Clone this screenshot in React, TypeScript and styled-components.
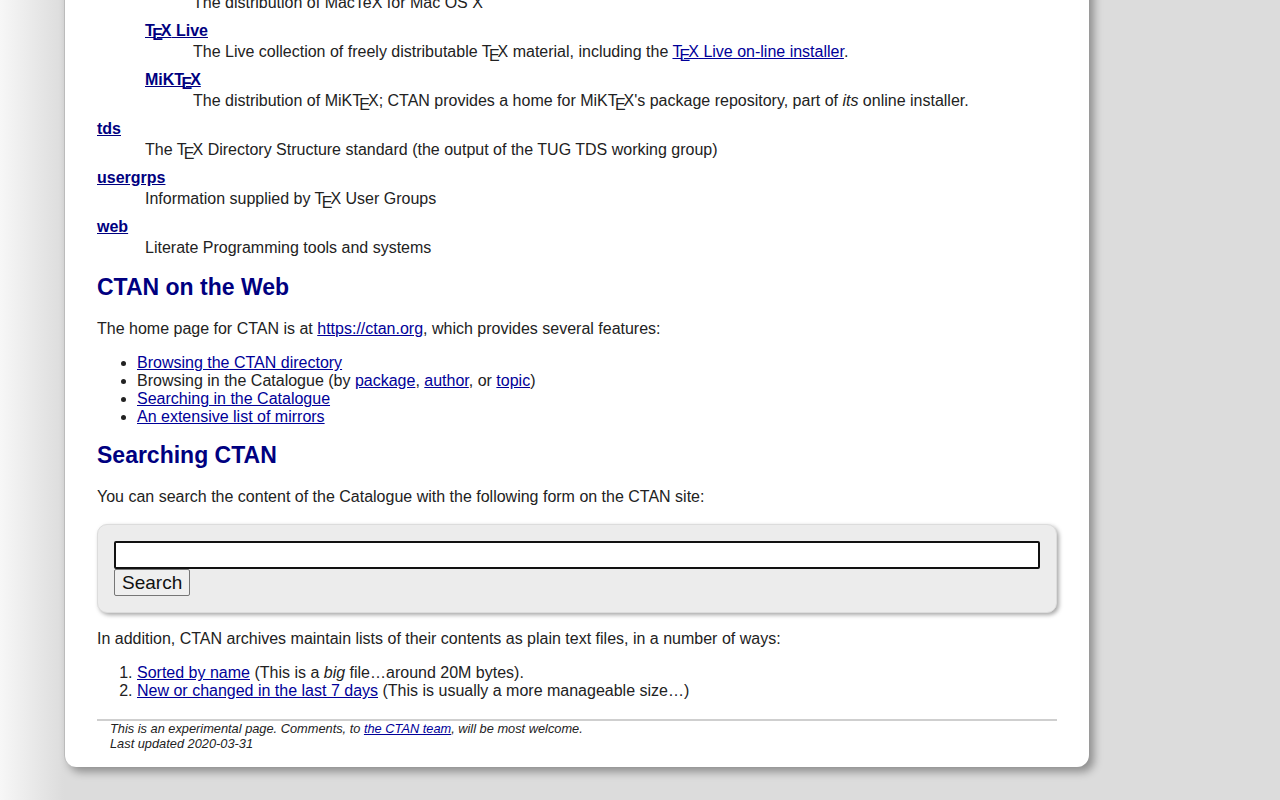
import styled, { createGlobalStyle } from "styled-components";

//GLOBAL
const GlobalStyle = createGlobalStyle`
  html, body {
    margin: 0;
    height: 100%;
    overflow: hidden;
  }
  body {
    background: linear-gradient(to right, #f7f7f7 0px, #dcdcdc 64px) #dcdcdc;
    font-family: "Liberation Sans", Arial, sans-serif;
    font-size: 16px;
    color: #222;
  }
`;

//PARTS
const TeX = () => (
  <span>
    T<LoweredE>E</LoweredE>X
  </span>
);

const Page = () => {
  return (
    <Card>
      <Dl>
        <Dd $nested>
          <Dl>
            <Dt>
              <Link href="#">MacTeX</Link>
            </Dt>
            <Dd>The distribution of MacTeX for Mac OS X</Dd>
            <Dt>
              <Link href="#">
                <TeX /> Live
              </Link>
            </Dt>
            <Dd>
              The Live collection of freely distributable <TeX /> material, including the{" "}
              <Link href="#">
                <TeX /> Live on-line installer
              </Link>
              .
            </Dd>
            <Dt>
              <Link href="#">
                MiKT<LoweredE>E</LoweredE>X
              </Link>
            </Dt>
            <Dd>
              The distribution of MiKT<LoweredE>E</LoweredE>X; CTAN provides a home for MiKT
              <LoweredE>E</LoweredE>X's package repository, part of <i>its</i> online installer.
            </Dd>
          </Dl>
        </Dd>
        <Dt>
          <Link href="#">tds</Link>
        </Dt>
        <Dd>
          The <TeX /> Directory Structure standard (the output of the TUG TDS working group)
        </Dd>
        <Dt>
          <Link href="#">usergrps</Link>
        </Dt>
        <Dd>
          Information supplied by <TeX /> User Groups
        </Dd>
        <Dt>
          <Link href="#">web</Link>
        </Dt>
        <Dd>Literate Programming tools and systems</Dd>
      </Dl>

      <Heading>CTAN on the Web</Heading>
      <Para>
        The home page for CTAN is at <Link href="#">https://ctan.org</Link>, which provides
        several features:
      </Para>
      <BulletList>
        <li>
          <Link href="#">Browsing the CTAN directory</Link>
        </li>
        <li>
          Browsing in the Catalogue (by <Link href="#">package</Link>,{" "}
          <Link href="#">author</Link>, or <Link href="#">topic</Link>)
        </li>
        <li>
          <Link href="#">Searching in the Catalogue</Link>
        </li>
        <li>
          <Link href="#">An extensive list of mirrors</Link>
        </li>
      </BulletList>

      <Heading>Searching CTAN</Heading>
      <Para>You can search the content of the Catalogue with the following form on the CTAN site:</Para>
      <SearchForm onSubmit={(e) => e.preventDefault()}>
        <SearchInput type="text" />
        <SearchButton type="submit">Search</SearchButton>
      </SearchForm>

      <Para>
        In addition, CTAN archives maintain lists of their contents as plain text files, in a
        number of ways:
      </Para>
      <NumberList>
        <li>
          <Link href="#">Sorted by name</Link> (This is a <i>big</i> file…around 20M bytes).
        </li>
        <li>
          <Link href="#">New or changed in the last 7 days</Link> (This is usually a more
          manageable size…)
        </li>
      </NumberList>

      <Rule />
      <Footer>
        This is an experimental page. Comments, to <Link href="#">the CTAN team</Link>, will be
        most welcome.
        <br />
        Last updated 2020-03-31
      </Footer>
    </Card>
  );
};

const App = () => (
  <>
    <GlobalStyle />
    <Page />
  </>
);

//STYLED-COMPONENTS
const Card = styled.main`
  box-sizing: border-box;
  width: 1025px;
  margin: -29px 0 0 64px;
  padding: 0 32px 16px 32px;
  background: #fff;
  border-left: 1px solid #bbb;
  border-radius: 0 0 12px 12px;
  box-shadow: 5px 5px 9px rgba(0, 0, 0, 0.35);
`;

const LoweredE = styled.span`
  position: relative;
  top: 0.28em;
  margin-left: -0.1667em;
  margin-right: -0.125em;
  text-transform: uppercase;
`;

const Link = styled.a`
  color: #000099;
  text-decoration: underline;
`;

const Dl = styled.dl`
  margin: 0;
`;

const Dt = styled.dt`
  line-height: 21px;
  font-weight: bold;

  a {
    color: #000080;
  }
`;

const Dd = styled.dd<{ $nested?: boolean }>`
  margin: 0 0 ${(p) => (p.$nested ? "0" : "7px")} 48px;
  line-height: 21px;
`;

const Heading = styled.h2`
  margin: 16px 0 20px;
  font-size: 23px;
  line-height: 26px;
  font-weight: bold;
  color: #000080;
`;

const Para = styled.p`
  margin: 16px 0;
  line-height: 18.4px;
`;

const BulletList = styled.ul`
  margin: 16px 0;
  padding-left: 40px;
  line-height: 18px;
`;

const NumberList = styled.ol`
  margin: 16px 0 0;
  padding-left: 40px;
  line-height: 18px;
`;

const SearchForm = styled.form`
  margin: 17px 0;
  padding: 16px;
  background: #ececec;
  border: 1px solid #dcdcdc;
  border-radius: 10px;
  box-shadow: 2px 2px 4px rgba(0, 0, 0, 0.35);
`;

const SearchInput = styled.input`
  display: block;
  box-sizing: border-box;
  width: 100%;
  height: 28px;
  margin: 0;
  border: 2px solid #111;
  border-radius: 2px;
  background: #fff;
  font-family: "Liberation Sans", Arial, sans-serif;
  font-size: 16px;
  outline: none;
`;

const SearchButton = styled.button`
  display: block;
  margin: 0;
  padding: 1px 7px;
  font-family: "Liberation Sans", Arial, sans-serif;
  font-size: 19px;
  line-height: 23px;
  color: #111;
  background: #efefef;
  border: 1px solid #767676;
  border-radius: 2px;
`;

const Rule = styled.hr`
  margin: 19px 0 0;
  height: 0;
  border: none;
  border-top: 2px solid #cfcfcf;
`;

const Footer = styled.address`
  padding-left: 13px;
  font-size: 12.8px;
  line-height: 15px;
  font-style: italic;
  color: #222;
`;

export default App;
